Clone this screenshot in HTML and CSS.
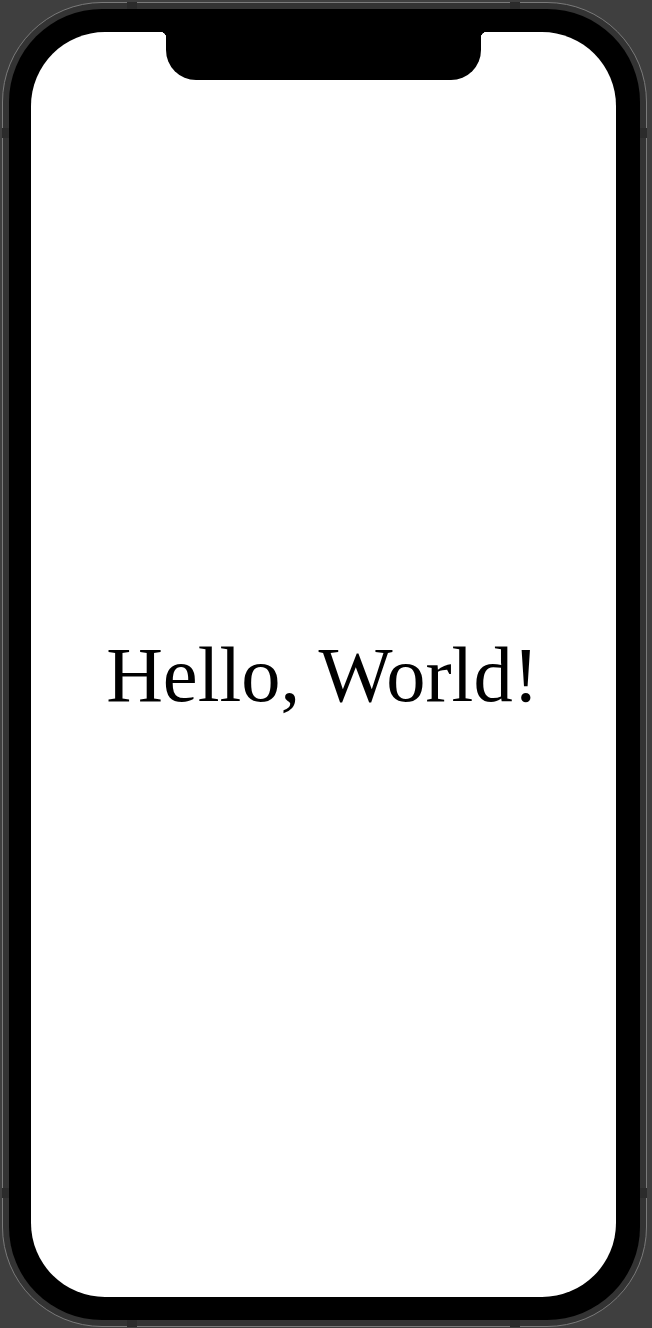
FILE: index.html
```html
<!DOCTYPE html>
<html lang="en">
<head>
<meta charset="utf-8">
<title>Hello, World!</title>
<link rel="stylesheet" href="styles.css">
</head>
<body>
<div class="device">
  <span class="band band-top band-l"></span>
  <span class="band band-top band-r"></span>
  <span class="band band-bottom band-l"></span>
  <span class="band band-bottom band-r"></span>
  <span class="band band-side band-left band-hi"></span>
  <span class="band band-side band-right band-hi"></span>
  <span class="band band-side band-left band-lo"></span>
  <span class="band band-side band-right band-lo"></span>
  <div class="bezel">
    <div class="screen">
      <div class="notch"></div>
      <p class="greeting">Hello, World!</p>
    </div>
  </div>
</div>
</body>
</html>
```
FILE: styles.css
```css
html, body {
  margin: 0;
  padding: 0;
  background: #3f3f3f;
}

.device {
  position: relative;
  box-sizing: border-box;
  margin: 2px 0 0 2px;
  width: 645px;
  height: 1325px;
  border: 1px solid #7a7a7a;
  border-radius: 100px;
  padding: 6px;
  background: #333333;
}

.bezel {
  box-sizing: border-box;
  height: 100%;
  background: #000;
  border-radius: 93px;
  padding: 23px 24px 23px 22px;
}

.screen {
  position: relative;
  height: 100%;
  background: #fff;
  border-radius: 74px;
  display: flex;
  align-items: center;
  justify-content: center;
  overflow: hidden;
}

.notch {
  position: absolute;
  top: 0;
  left: 135px;
  width: 315px;
  height: 48px;
  background: #000;
  border-radius: 0 0 30px 30px;
}

.notch::before,
.notch::after {
  content: "";
  position: absolute;
  top: 0;
  width: 6px;
  height: 6px;
}

.notch::before {
  left: -6px;
  background: radial-gradient(circle at 0 100%, transparent 6px, #000 6.5px);
}

.notch::after {
  right: -6px;
  background: radial-gradient(circle at 100% 100%, transparent 6px, #000 6.5px);
}

.greeting {
  margin: 0;
  padding-top: 20px;
  padding-right: 2px;
  font-family: "Liberation Serif", "Times New Roman", serif;
  font-size: 78.5px;
  color: #000;
  white-space: nowrap;
}

.band {
  position: absolute;
  background: #2b2b2b;
}

.band-top,
.band-bottom {
  width: 10px;
  height: 7px;
}

.band-top { top: -1px; }
.band-bottom { bottom: -1px; }
.band-l { left: 124px; }
.band-r { left: 507px; }

.band-side {
  width: 7px;
  height: 10px;
}

.band-left { left: -1px; }
.band-right { right: -1px; }
.band-hi { top: 125px; }
.band-lo { top: 1185px; }
```
